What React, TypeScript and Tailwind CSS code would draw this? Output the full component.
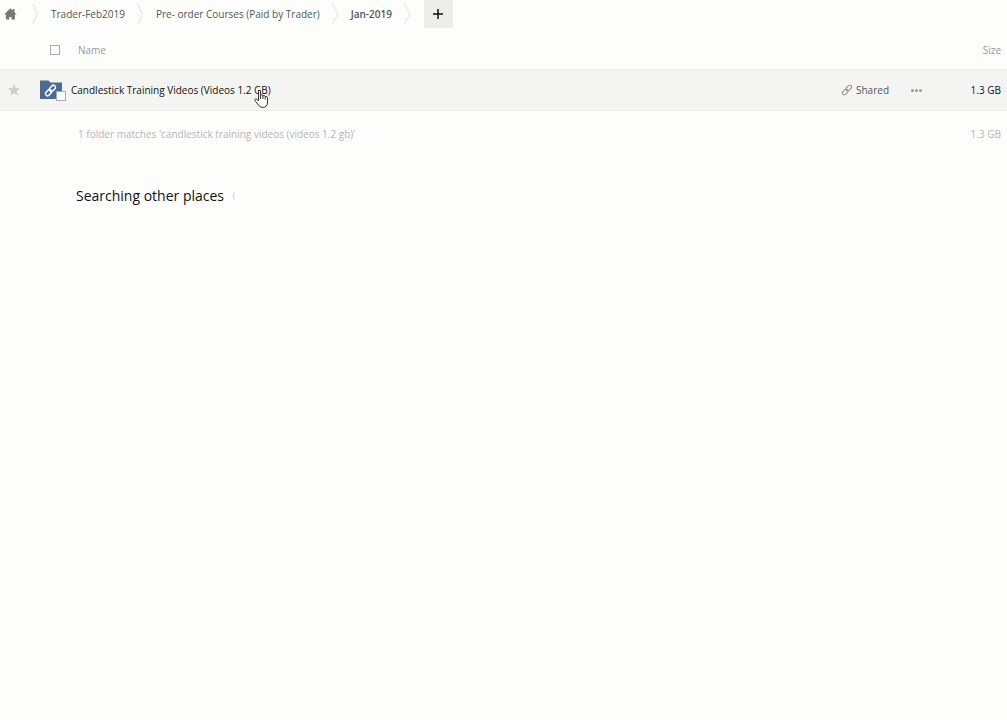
import { useState } from 'react'

const crumbs = ['Trader-Feb2019', 'Pre- order Courses (Paid by Trader)', 'Jan-2019']

function Chevron() {
  return (
    <svg width="8" height="22" viewBox="0 0 8 22" fill="none" stroke="#e2e2e1" className="shrink-0">
      <path d="M0.5 0.5 L5.5 11 L0.5 21.5" />
    </svg>
  )
}

function HomeIcon() {
  return (
    <svg width="13" height="12" viewBox="0 0 13 12" fill="#777777">
      <path d="M6.3 0.3 L8.6 2.5 V1 H10.5 V4.3 L12.6 6.5 H10.9 V11.5 H7.5 V9 H5.3 V11.5 H1.9 V6.5 H0.2 Z" />
    </svg>
  )
}

function LinkIcon({ size, color, width }: { size: number; color: string; width: number }) {
  return (
    <svg
      width={size}
      height={size}
      viewBox="0 0 12 12"
      fill="none"
      stroke={color}
      strokeWidth={width}
      strokeLinecap="round"
      className="shrink-0"
    >
      <rect x="-3.2" y="-1.9" width="6.4" height="3.8" rx="1.9" transform="translate(7.8 4) rotate(-48)" />
      <rect x="-3.2" y="-1.9" width="6.4" height="3.8" rx="1.9" transform="translate(4.2 8) rotate(-48)" />
    </svg>
  )
}

function FolderIcon() {
  return (
    <svg width="22" height="19" viewBox="0 0 22 19" fill="#4b6a94">
      <path d="M0 0.5 H8.5 L10.5 2.5 H22 V19 H0 Z" />
    </svg>
  )
}

function HandCursor() {
  return (
    <svg
      width="15"
      height="18"
      viewBox="0 0 15 18"
      fill="#fdfdfc"
      stroke="#333333"
      strokeLinejoin="round"
      className="pointer-events-none absolute -bottom-2.5 right-0.5"
    >
      <path d="M4.5 11 V1.7 Q4.5 0.6 5.5 0.6 Q6.5 0.6 6.5 1.7 V6 V5 Q8.7 4.2 8.9 5.7 Q11 5 11.2 6.5 Q13.4 6 13.5 7.8 V12 Q13.5 17.4 8.5 17.4 Q5.8 17.4 4.5 15 L1.2 10.8 Q0.4 9.2 1.6 8.7 Q2.6 8.4 4.5 11 Z" />
      <path d="M6.5 5 V9 M8.9 5.7 V9 M11.2 6.5 V9.5" />
    </svg>
  )
}

export default function App() {
  const [starred, setStarred] = useState(false)
  const [selected, setSelected] = useState(false)

  const box = 'block appearance-none border border-[#aaaaaa] bg-white checked:bg-[#4b6a94]'

  return (
    <div className="min-h-screen bg-[#fdfdfc] font-['Open_Sans',sans-serif] text-[10px] leading-4 text-[#555555]">
      {/* Breadcrumbs */}
      <nav aria-label="Breadcrumb" className="flex h-7 items-center pl-1">
        <a href="#home" aria-label="Home" className="mr-[15px]">
          <HomeIcon />
        </a>
        {crumbs.map((crumb, i) => (
          <div key={crumb} className="flex items-center">
            <Chevron />
            <a
              href={`#${i}`}
              className={`ml-[11px] mr-3 whitespace-nowrap ${i === crumbs.length - 1 ? 'font-semibold' : ''}`}
            >
              {crumb}
            </a>
          </div>
        ))}
        <Chevron />
        <button aria-label="Add" className="ml-3 flex h-7 w-[29px] items-center justify-center bg-[#ededec]">
          <svg width="10" height="10" viewBox="0 0 10 10" stroke="#111111" strokeWidth="1.5">
            <path d="M5 0 V10 M0 5 H10" />
          </svg>
        </button>
      </nav>

      {/* Search results */}
      <table className="w-full table-fixed border-collapse">
        <colgroup>
          <col className="w-7" />
          <col className="w-[43px]" />
          <col />
          <col className="w-16" />
          <col className="w-8" />
          <col className="w-[70px]" />
        </colgroup>
        <thead>
          <tr className="h-[41px] text-left text-[#999999]">
            <th />
            <th className="pt-1 pl-[22px]">
              <input
                type="checkbox"
                aria-label="Select all"
                checked={selected}
                onChange={e => setSelected(e.target.checked)}
                className={`size-2.5 ${box}`}
              />
            </th>
            <th className="pt-1 pl-[7px] font-normal">Name</th>
            <th />
            <th />
            <th className="pt-1 pr-1.5 text-right font-normal">Size</th>
          </tr>
        </thead>
        <tbody>
          <tr className="h-[41px] border-y border-[#ececeb] bg-[#f4f4f3]">
            <td className="pl-2">
              <button aria-label="Star" aria-pressed={starred} onClick={() => setStarred(!starred)} className="block">
                <svg width="12" height="12" viewBox="0 0 12 12" fill={starred ? '#e0b040' : '#cdcdcc'}>
                  <path d="M6 0 L7.6 4.1 L12 4.4 L8.6 7.2 L9.7 11.5 L6 9.1 L2.3 11.5 L3.4 7.2 L0 4.4 L4.4 4.1 Z" />
                </svg>
              </button>
            </td>
            <td className="pl-3">
              <div className="relative w-[22px]">
                <FolderIcon />
                <span className="absolute left-1 top-1">
                  <LinkIcon size={13} color="#ffffff" width={1.4} />
                </span>
                <input
                  type="checkbox"
                  aria-label="Select Candlestick Training Videos"
                  checked={selected}
                  onChange={e => setSelected(e.target.checked)}
                  className={`absolute -bottom-0.5 -right-1 size-2.5 ${box}`}
                />
              </div>
            </td>
            <td className="text-[#111111]">
              <span className="relative inline-block">
                <a href="#folder">Candlestick Training Videos (Videos 1.2 GB)</a>
                <HandCursor />
              </span>
            </td>
            <td>
              <button className="flex items-center gap-[3px]">
                <LinkIcon size={12} color="#888888" width={1} />
                Shared
              </button>
            </td>
            <td>
              <button aria-label="More" className="ml-1.5 flex gap-px pt-0.5">
                <span className="size-[3px] rounded-full bg-[#999999]" />
                <span className="size-[3px] rounded-full bg-[#999999]" />
                <span className="size-[3px] rounded-full bg-[#999999]" />
              </button>
            </td>
            <td className="pr-1.5 text-right text-[#111111]">1.3 GB</td>
          </tr>
        </tbody>
        <tfoot>
          <tr className="h-12 text-[#b5b5b4]">
            <td colSpan={2} />
            <td colSpan={3} className="pl-[7px]">
              1 folder matches 'candlestick training videos (videos 1.2 gb)'
            </td>
            <td className="pr-1.5 text-right">1.3 GB</td>
          </tr>
        </tfoot>
      </table>

      {/* Other places */}
      <div className="mt-7 flex items-center gap-2 pl-[76px]">
        <h2 className="text-sm leading-5 text-[#111111]">Searching other places</h2>
        <svg width="3" height="8" viewBox="0 0 3 8" fill="none" stroke="#cccccc" role="status">
          <path d="M2.5 0.5 Q-0.5 4 2.5 7.5" />
        </svg>
      </div>
    </div>
  )
}
